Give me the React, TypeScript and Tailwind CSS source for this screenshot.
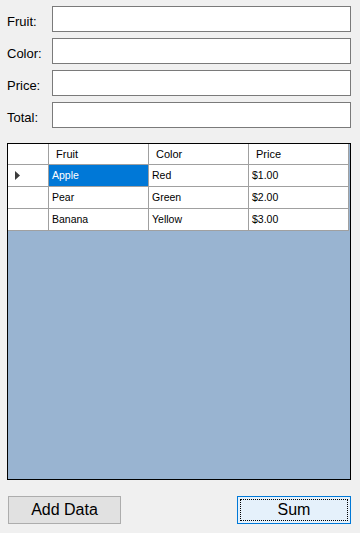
import React from "react";

const fields = ["Fruit:", "Color:", "Price:", "Total:"];

const rows = [
  { fruit: "Apple", color: "Red", price: "$1.00" },
  { fruit: "Pear", color: "Green", price: "$2.00" },
  { fruit: "Banana", color: "Yellow", price: "$3.00" },
];

export default function App() {
  return (
    <div className="w-[360px] h-[533px] bg-[#f0f0f0] font-['Liberation_Sans',Arial,sans-serif] text-black pl-[7px] pr-[9px] pt-[6px] overflow-hidden">
      {/* form fields */}
      <div className="flex flex-col gap-[6px]">
        {fields.map((label) => (
          <div key={label} className="flex items-center h-[26px]">
            <span className="w-[45px] text-[13px] leading-none pt-[5px]">{label}</span>
            <input
              type="text"
              className="w-[299px] h-[26px] bg-white border border-[#7a7a7a] outline-none px-1 text-[13px]"
            />
          </div>
        ))}
      </div>

      {/* data grid */}
      <div className="mt-[15px] w-[344px] h-[337px] border border-black bg-[#99b4d1] text-[10.5px]">
        <div className="flex w-fit bg-white h-[21px]">
          <div className="w-[41px] border-r border-b border-[#a0a0a0]" />
          {["Fruit", "Color", "Price"].map((h) => (
            <div
              key={h}
              className="w-[100px] border-r border-b border-[#a0a0a0] pl-[7px] pt-[5px] text-[11px] leading-none"
            >
              {h}
            </div>
          ))}
        </div>
        {rows.map((r, i) => (
          <div key={r.fruit} className="flex w-fit bg-white h-[22px]">
            <div className="w-[41px] border-r border-b border-[#a0a0a0] flex items-center pl-[7px]">
              {i === 0 && (
                <svg width="5" height="9" viewBox="0 0 5 9">
                  <path d="M0 0 L5 4.5 L0 9 Z" fill="#3c3c3c" />
                </svg>
              )}
            </div>
            <div
              className={`w-[100px] border-r border-b border-[#a0a0a0] flex items-center pl-[3px] ${
                i === 0 ? "bg-[#0078d7] text-white" : ""
              }`}
            >
              {r.fruit}
            </div>
            <div className="w-[100px] border-r border-b border-[#a0a0a0] flex items-center pl-[3px]">
              {r.color}
            </div>
            <div className="w-[100px] border-r border-b border-[#a0a0a0] flex items-center pl-[3px]">
              {r.price}
            </div>
          </div>
        ))}
      </div>

      {/* buttons */}
      <div className="mt-[16px] flex justify-between pl-[1px] pr-0">
        <button className="w-[113px] h-[28px] bg-[#e1e1e1] border border-[#adadad] text-[16px] leading-none">
          Add Data
        </button>
        <button className="w-[114px] h-[28px] bg-[#e5f1fb] border border-[#0078d7] p-[2px]">
          <div className="w-full h-full border border-dotted border-black flex items-center justify-center text-[16px] leading-none">
            Sum
          </div>
        </button>
      </div>
    </div>
  );
}
